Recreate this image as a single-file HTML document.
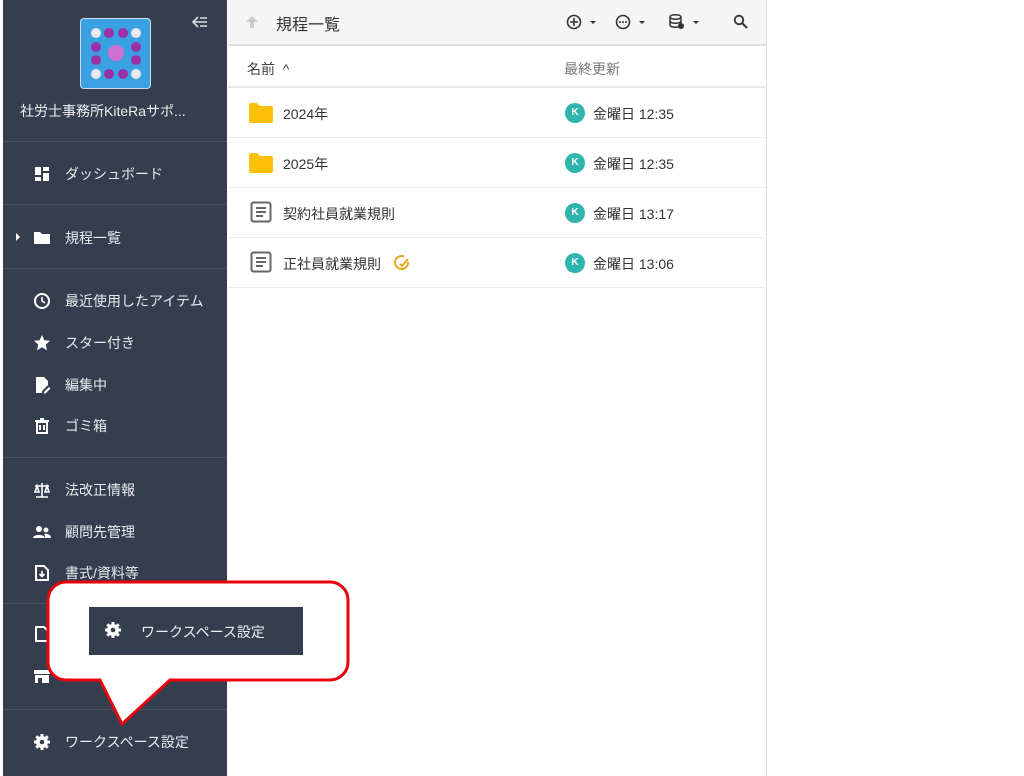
<!DOCTYPE html>
<html><head><meta charset="utf-8"><style>
*{margin:0;padding:0;box-sizing:border-box}
body{width:1024px;height:776px;background:#fff;font-family:"Liberation Sans","Noto Sans CJK JP",sans-serif;position:relative;overflow:hidden}
.sb{position:absolute;left:3px;top:0;width:224px;height:776px;background:#353e4f;color:#e8eaee}
.hr{position:absolute;left:0;width:224px;height:1px;background:#4a5262}
.it{position:absolute;left:30px;font-size:14px;color:#e8eaee;display:flex;align-items:center;gap:0}
.it svg{width:18px;height:18px;margin-right:14px}
.main{position:absolute;left:228px;top:0;width:539px;height:776px;border-right:1px solid #ddd}
.hd{height:46px;background:#f5f5f5;border-bottom:2px solid #e0e0e0;position:relative}
.row{position:absolute;left:0;width:539px;height:50px;border-bottom:1px solid #eee;font-size:14px;color:#333}
.av{position:absolute;left:337px;width:20px;height:20px;border-radius:50%;background:#2fb5ad;color:#fff;font-size:10px;text-align:center;line-height:20px;font-weight:bold}
.tm{position:absolute;left:365px;font-size:14px;color:#333}
</style></head><body>
<div class="sb">
 <div style="position:absolute;left:77px;top:18px;width:71px;height:71px;border-radius:4px;background:#3aa2e2;border:1px solid #cde"></div>
 <svg style="position:absolute;left:77px;top:18px" width="71" height="71">
  <g fill="#e8e8ee"><circle cx="16" cy="15" r="5"/><circle cx="56" cy="15" r="5"/><circle cx="16" cy="56" r="5"/><circle cx="56" cy="56" r="5"/></g>
  <g fill="#9b2fa8"><circle cx="29" cy="15" r="5"/><circle cx="43" cy="15" r="5"/><circle cx="29" cy="56" r="5"/><circle cx="43" cy="56" r="5"/><circle cx="16" cy="29" r="5"/><circle cx="16" cy="42" r="5"/><circle cx="56" cy="29" r="5"/><circle cx="56" cy="42" r="5"/></g>
  <circle cx="36" cy="35" r="8" fill="#cf6fd0"/></svg>
 <svg style="position:absolute;left:189px;top:16px" width="16" height="12"><path d="M6 1L1 6l5 5M1 6h14M8 2h7M8 10h7" stroke="#ddd" stroke-width="1.6" fill="none"/></svg>
 <div style="position:absolute;left:17px;top:101px;font-size:14px;color:#eee">社労士事務所KiteRaサポ...</div>
 <div class="hr" style="top:141px"></div>
 <div class="it" style="top:164px"><svg viewBox="0 0 18 18"><path fill="#fff" d="M2 2h6v8H2zM10 2h6v4h-6zM10 8h6v8h-6zM2 12h6v4H2z"/></svg>ダッシュボード</div>
 <div class="hr" style="top:204px"></div>
 <div style="position:absolute;left:13px;top:233px;border-left:4px solid #fff;border-top:4px solid transparent;border-bottom:4px solid transparent"></div>
 <div class="it" style="top:228px"><svg viewBox="0 0 18 18"><path fill="#fff" d="M1 3h6l2 2h8v10H1z"/></svg>規程一覧</div>
 <div class="hr" style="top:268px"></div>
 <div class="it" style="top:291px"><svg viewBox="0 0 18 18"><circle cx="9" cy="9" r="7" fill="none" stroke="#fff" stroke-width="2"/><path d="M9 5v4l3 2" stroke="#fff" stroke-width="1.6" fill="none"/></svg>最近使用したアイテム</div>
 <div class="it" style="top:333px"><svg viewBox="0 0 18 18"><path fill="#fff" d="M9 1l2.4 5.3 5.6.5-4.3 3.8 1.3 5.6L9 13.3 4 16.2l1.3-5.6L1 6.8l5.6-.5z"/></svg>スター付き</div>
 <div class="it" style="top:375px"><svg viewBox="0 0 18 18"><path fill="#fff" d="M3 1h8l4 4v4l-6 6v2H3z"/><path fill="#fff" d="M11 16l5-5 1.5 1.5-5 5H11z"/></svg>編集中</div>
 <div class="it" style="top:416px"><svg viewBox="0 0 18 18"><path fill="none" stroke="#fff" stroke-width="2" d="M4 5h10v11H4zM2 4h14M7 2h4M7 8v5M11 8v5"/></svg>ゴミ箱</div>
 <div class="hr" style="top:457px"></div>
 <div class="it" style="top:480px"><svg viewBox="0 0 18 18"><path fill="none" stroke="#fff" stroke-width="1.6" d="M9 2v14M3 16h12M2 5h14M4 5l-2 6h4zM14 5l-2 6h4z"/></svg>法改正情報</div>
 <div class="it" style="top:522px"><svg viewBox="0 0 18 18"><circle cx="6" cy="6" r="3" fill="#fff"/><circle cx="13" cy="7" r="2.5" fill="#fff"/><path fill="#fff" d="M0 15c0-4 12-4 12 0zM12 15c0-2 0-3-1-4 4-1 7 1 7 4z"/></svg>顧問先管理</div>
 <div class="it" style="top:563px"><svg viewBox="0 0 18 18"><path fill="none" stroke="#fff" stroke-width="2" d="M3 2h8l4 4v10H3z"/><path d="M9 7v5M6.5 10l2.5 2.5 2.5-2.5" stroke="#fff" stroke-width="1.6" fill="none"/></svg>書式/資料等</div>
 <div class="hr" style="top:603px"></div>
 <div class="it" style="top:624px"><svg viewBox="0 0 18 18"><path fill="none" stroke="#fff" stroke-width="2" d="M3 2h8l4 4v10H3z"/></svg>テンプレート</div>
 <div class="it" style="top:666px"><svg viewBox="0 0 18 18"><path fill="#fff" d="M1 3h16v4H1zM2 8h14v8H2z"/><path fill="#353e4f" d="M5 11h4v5H5z"/></svg>ストア</div>
 <div class="hr" style="top:709px"></div>
 <div class="it" style="top:732px"><svg viewBox="0 0 18 18"><circle cx="9" cy="9" r="6" fill="#fff"/><path stroke="#fff" stroke-width="3" d="M9 1v16M1 9h16M3.3 3.3l11.4 11.4M14.7 3.3L3.3 14.7"/><circle cx="9" cy="9" r="2.3" fill="#353e4f"/></svg>ワークスペース設定</div>
</div>
<div class="main">
 <div class="hd">
  <svg style="position:absolute;left:17px;top:15px" width="14" height="14"><path d="M7 1L1 7h4v6h4V7h4z" fill="#ccc"/></svg>
  <div style="position:absolute;left:48px;top:11px;font-size:16px;color:#333">規程一覧</div>
  <svg style="position:absolute;left:338px;top:13px" width="34" height="18"><circle cx="8" cy="9" r="6.5" fill="none" stroke="#333" stroke-width="1.6"/><path d="M8 5v8M4 9h8" stroke="#333" stroke-width="1.6"/><path d="M24 8h6l-3 3z" fill="#333"/></svg>
  <svg style="position:absolute;left:387px;top:13px" width="34" height="18"><circle cx="8" cy="9" r="6.5" fill="none" stroke="#333" stroke-width="1.6"/><circle cx="5" cy="9" r="1" fill="#333"/><circle cx="8" cy="9" r="1" fill="#333"/><circle cx="11" cy="9" r="1" fill="#333"/><path d="M24 8h6l-3 3z" fill="#333"/></svg>
  <svg style="position:absolute;left:440px;top:13px" width="36" height="18"><path d="M2 4c0-3 11-3 11 0v8c0 3-11 3-11 0zM2 4c0 3 11 3 11 0M2 8c0 3 11 3 11 0" fill="none" stroke="#333" stroke-width="1.5"/><circle cx="13" cy="13" r="3" fill="#333"/><path d="M25 8h6l-3 3z" fill="#333"/></svg>
  <svg style="position:absolute;left:505px;top:14px" width="16" height="16"><circle cx="6" cy="6" r="4.3" fill="none" stroke="#333" stroke-width="1.8"/><path d="M9 9l5 5" stroke="#333" stroke-width="2"/></svg>
 </div>
 <div style="position:absolute;top:46px;height:42px;width:539px;border-bottom:2px solid #e8e8e8">
  <div style="position:absolute;left:19px;top:13px;font-size:14px;color:#444">名前 &nbsp;^</div>
  <div style="position:absolute;left:336px;top:13px;font-size:14px;color:#777">最終更新</div>
 </div>
 <div class="row" style="top:88px"><svg style="position:absolute;left:21px;top:15px" width="24" height="20"><path fill="#ffc107" d="M0 2a2 2 0 0 1 2-2h6l3 3h11a2 2 0 0 1 2 2v13a2 2 0 0 1-2 2H2a2 2 0 0 1-2-2z"/></svg><div style="position:absolute;left:55px;top:16px">2024年</div><div class="av" style="top:15px">K</div><div class="tm" style="top:16px">金曜日 12:35</div></div>
 <div class="row" style="top:138px"><svg style="position:absolute;left:21px;top:15px" width="24" height="20"><path fill="#ffc107" d="M0 2a2 2 0 0 1 2-2h6l3 3h11a2 2 0 0 1 2 2v13a2 2 0 0 1-2 2H2a2 2 0 0 1-2-2z"/></svg><div style="position:absolute;left:55px;top:16px">2025年</div><div class="av" style="top:15px">K</div><div class="tm" style="top:16px">金曜日 12:35</div></div>
 <div class="row" style="top:188px"><svg style="position:absolute;left:22px;top:13px" width="22" height="22"><rect x="1.5" y="1.5" width="19" height="19" rx="2" fill="none" stroke="#666" stroke-width="2"/><path d="M6 7h10M6 11h10M6 15h7" stroke="#666" stroke-width="2"/></svg><div style="position:absolute;left:55px;top:16px">契約社員就業規則</div><div class="av" style="top:15px">K</div><div class="tm" style="top:16px">金曜日 13:17</div></div>
 <div class="row" style="top:238px"><svg style="position:absolute;left:22px;top:13px" width="22" height="22"><rect x="1.5" y="1.5" width="19" height="19" rx="2" fill="none" stroke="#666" stroke-width="2"/><path d="M6 7h10M6 11h10M6 15h7" stroke="#666" stroke-width="2"/></svg><div style="position:absolute;left:55px;top:16px">正社員就業規則</div><svg style="position:absolute;left:166px;top:17px" width="16" height="16"><path d="M14 7a6.5 6.5 0 1 1-4-5.5" fill="none" stroke="#e6a817" stroke-width="2"/><path d="M6 9l2 2 6-7" fill="none" stroke="#e6a817" stroke-width="2"/></svg><div class="av" style="top:15px">K</div><div class="tm" style="top:16px">金曜日 13:06</div></div>
</div>
<svg style="position:absolute;left:0;top:0" width="1024" height="776">
 <path d="M66 582H330a18 18 0 0 1 18 18v62a18 18 0 0 1-18 18H170L122 724 100 680H66a18 18 0 0 1-18-18v-62a18 18 0 0 1 18-18z" fill="#fff" stroke="#e8000b" stroke-width="3"/>
</svg>
<div style="position:absolute;left:89px;top:607px;width:214px;height:48px;background:#353e4f;color:#eee;font-size:14px">
 <svg style="position:absolute;left:15px;top:14px" width="18" height="18" viewBox="0 0 18 18"><circle cx="9" cy="9" r="6" fill="#fff"/><path stroke="#fff" stroke-width="3" d="M9 1v16M1 9h16M3.3 3.3l11.4 11.4M14.7 3.3L3.3 14.7"/><circle cx="9" cy="9" r="2.3" fill="#353e4f"/></svg>
 <div style="position:absolute;left:52px;top:15px">ワークスペース設定</div></div>
</body></html>
